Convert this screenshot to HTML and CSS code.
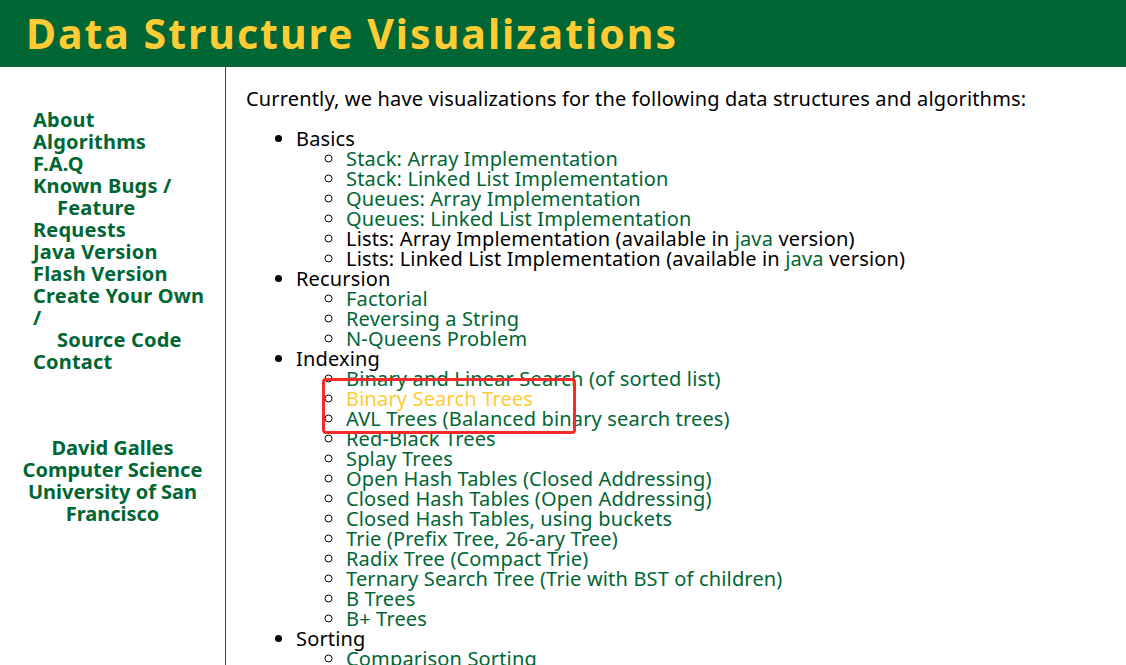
FILE: index.html
```html
<!DOCTYPE html>
<html>
<head>
<meta charset="utf-8">
<title>Data Structure Visualizations</title>
<link rel="stylesheet" href="styles.css">
</head>
<body>
<div class="header"><h1 class="title">Data Structure Visualizations</h1></div>
<div class="layout">
  <div class="sidebar">
    <div class="nav">
      <a href="#">About</a>
      <a href="#">Algorithms</a>
      <a href="#">F.A.Q</a>
      <a href="#">Known Bugs /<br><span class="indent">Feature</span><br>Requests</a>
      <a href="#">Java Version</a>
      <a href="#">Flash Version</a>
      <a href="#">Create Your Own<br>/<br><span class="indent">Source Code</span></a>
      <a href="#">Contact</a>
    </div>
    <div class="credits">David Galles<br>Computer Science<br>University of San<br>Francisco</div>
  </div>
  <div class="main">
    <p class="intro">Currently, we have visualizations for the following data structures and algorithms:</p>
    <ul class="topics">
      <li>Basics
        <ul class="sub">
          <li><a href="#">Stack: Array Implementation</a></li>
          <li><a href="#">Stack: Linked List Implementation</a></li>
          <li><a href="#">Queues: Array Implementation</a></li>
          <li><a href="#">Queues: Linked List Implementation</a></li>
          <li>Lists: Array Implementation (available in <a href="#">java</a> version)</li>
          <li>Lists: Linked List Implementation (available in <a href="#">java</a> version)</li>
        </ul>
      </li>
      <li>Recursion
        <ul class="sub">
          <li><a href="#">Factorial</a></li>
          <li><a href="#">Reversing a String</a></li>
          <li><a href="#">N-Queens Problem</a></li>
        </ul>
      </li>
      <li>Indexing
        <ul class="sub">
          <li><a href="#">Binary and Linear Search (of sorted list)</a></li>
          <li><a href="#" class="hot">Binary Search Trees</a></li>
          <li><a href="#">AVL Trees (Balanced binary search trees)</a></li>
          <li><a href="#">Red-Black Trees</a></li>
          <li><a href="#">Splay Trees</a></li>
          <li><a href="#">Open Hash Tables (Closed Addressing)</a></li>
          <li><a href="#">Closed Hash Tables (Open Addressing)</a></li>
          <li><a href="#">Closed Hash Tables, using buckets</a></li>
          <li><a href="#">Trie (Prefix Tree, 26-ary Tree)</a></li>
          <li><a href="#">Radix Tree (Compact Trie)</a></li>
          <li><a href="#">Ternary Search Tree (Trie with BST of children)</a></li>
          <li><a href="#">B Trees</a></li>
          <li><a href="#">B+ Trees</a></li>
        </ul>
      </li>
      <li>Sorting
        <ul class="sub">
          <li><a href="#">Comparison Sorting</a></li>
          <li><a href="#">Bucket Sort</a></li>
          <li><a href="#">Counting Sort</a></li>
        </ul>
      </li>
    </ul>
  </div>
</div>
<div class="highlight"></div>
</body>
</html>
```
FILE: styles.css
```css
html, body {
  margin: 0;
  padding: 0;
  height: 665px;
  overflow: hidden;
  background: #ffffff;
  font-family: "Noto Sans", "Open Sans", sans-serif;
  color: #000;
}
.header {
  background: #006633;
  height: 67px;
  display: flex;
  align-items: center;
  padding-left: 26px;
}
.title {
  margin: 0;
  color: #ffcc33;
  font-family: "Noto Sans", sans-serif;
  font-weight: 700;
  font-size: 41px;
  letter-spacing: 2px;
  line-height: 67px;
}
.layout {
  display: flex;
  height: 598px;
}
.sidebar {
  width: 226px;
  flex: 0 0 226px;
  border-right: 1px solid #006633;
  padding-top: 42px;
  box-sizing: border-box;
}
.nav {
  display: flex;
  flex-direction: column;
  padding-left: 33px;
}
.nav a {
  color: #006633;
  text-decoration: none;
  font-weight: 700;
  font-size: 20px;
  line-height: 22px;
  letter-spacing: 0.2px;
}
.indent {
  padding-left: 24px;
}
.credits {
  margin-top: 64px;
  text-align: center;
  color: #006633;
  font-weight: 700;
  font-size: 20px;
  line-height: 22px;
}
.main {
  flex: 1;
  padding: 22px 0 0 20px;
  font-size: 20px;
  line-height: 20px;
  letter-spacing: 0.16px;
}
.intro {
  margin: 0 0 20px 0;
}
.topics {
  margin: 0;
  padding-left: 50px;
  list-style: disc;
}
.sub {
  margin: 0;
  padding-left: 50px;
  list-style: circle;
}
.main a {
  color: #006633;
  text-decoration: none;
}
.main a.hot {
  color: #ffcc33;
}
.highlight {
  position: absolute;
  left: 322px;
  top: 378px;
  width: 254px;
  height: 56px;
  box-sizing: border-box;
  border: 3px solid #f52a2a;
  border-radius: 4px;
}
```
